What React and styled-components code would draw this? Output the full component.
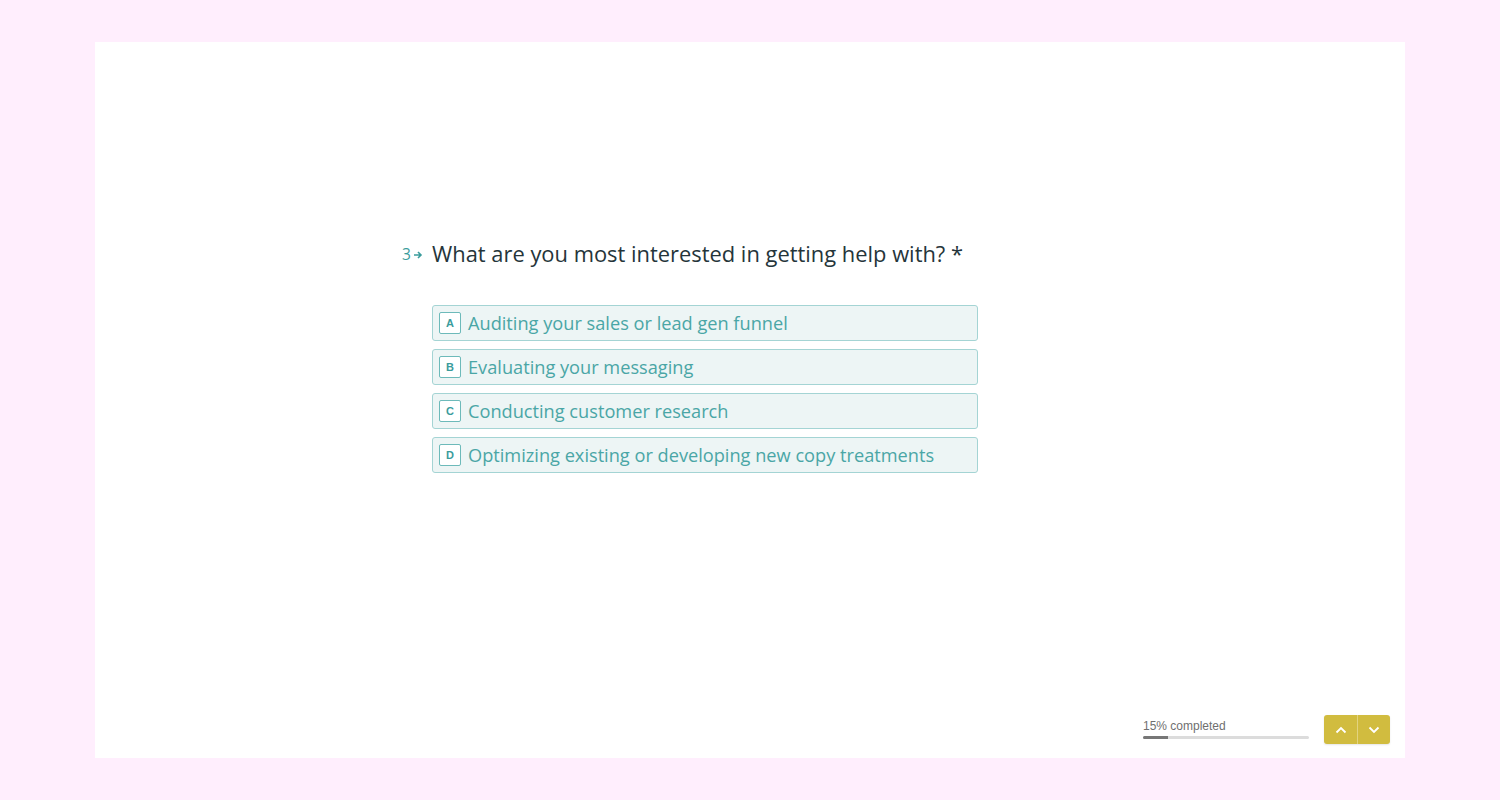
import styled, { createGlobalStyle } from "styled-components";

const GlobalStyle = createGlobalStyle`
  html, body {
    margin: 0;
    padding: 0;
    background: #ffeefd;
  }
  body {
    font-family: "Open Sans", "Liberation Sans", sans-serif;
  }
`;

const choices = [
  { key: "A", label: "Auditing your sales or lead gen funnel" },
  { key: "B", label: "Evaluating your messaging" },
  { key: "C", label: "Conducting customer research" },
  { key: "D", label: "Optimizing existing or developing new copy treatments" },
];

const App = () => {
  return (
    <Page>
      <GlobalStyle />
      <Card>
        <Main>
          <Question>
            <Counter>
              3
              <svg width="10" height="10" viewBox="0 0 10 10">
                <path d="M1 5h7M5 2l3 3-3 3" stroke="#3a9c9c" strokeWidth="1.6" fill="none" />
              </svg>
            </Counter>
            <Body>
              <Title>What are you most interested in getting help with? *</Title>
              <Choices>
                {choices.map((c) => (
                  <Choice key={c.key}>
                    <KeyBox>{c.key}</KeyBox>
                    <ChoiceLabel>{c.label}</ChoiceLabel>
                  </Choice>
                ))}
              </Choices>
            </Body>
          </Question>
        </Main>
        <Footer>
          <Progress>
            <ProgressText>15% completed</ProgressText>
            <Track>
              <Fill style={{ width: "15%" }} />
            </Track>
          </Progress>
          <NavButtons>
            <NavButton aria-label="previous">
              <svg width="14" height="14" viewBox="0 0 14 14">
                <path d="M2.5 9.5L7 5l4.5 4.5" stroke="#fff" strokeWidth="1.8" fill="none" />
              </svg>
            </NavButton>
            <NavButton aria-label="next" $divider>
              <svg width="14" height="14" viewBox="0 0 14 14">
                <path d="M2.5 4.5L7 9l4.5-4.5" stroke="#fff" strokeWidth="1.8" fill="none" />
              </svg>
            </NavButton>
          </NavButtons>
        </Footer>
      </Card>
    </Page>
  );
};

const Page = styled.div`
  box-sizing: border-box;
  height: 800px;
  padding: 42px 95px;
`;

const Card = styled.div`
  background: #fff;
  height: 716px;
  display: flex;
  flex-direction: column;
`;

const Main = styled.div`
  flex: 1;
  padding-top: 198px;
  padding-left: 307px;
`;

const Question = styled.div`
  display: flex;
`;

const Counter = styled.div`
  width: 30px;
  display: flex;
  align-items: center;
  gap: 2px;
  height: 28px;
  font-size: 15.5px;
  color: #3a9c9c;
  svg {
    margin-top: 1px;
  }
`;

const Body = styled.div`
  display: flex;
  flex-direction: column;
`;

const Title = styled.h1`
  margin: -1px 0 0;
  font-size: 21.9px;
  font-weight: 400;
  line-height: 30px;
  color: #25353a;
`;

const Choices = styled.div`
  margin-top: 36px;
  display: flex;
  flex-direction: column;
  gap: 8px;
  width: 546px;
`;

const Choice = styled.div`
  box-sizing: border-box;
  height: 36px;
  display: flex;
  align-items: center;
  padding: 0 6px;
  gap: 7px;
  background: #edf5f5;
  border: 1px solid #a4d4d4;
  border-radius: 3px;
`;

const KeyBox = styled.span`
  box-sizing: border-box;
  width: 22px;
  height: 22px;
  display: flex;
  align-items: center;
  justify-content: center;
  background: #fff;
  border: 1px solid #6dbaba;
  border-radius: 2px;
  font-family: "Liberation Sans", Arial, sans-serif;
  font-size: 11px;
  font-weight: 700;
  color: #3a9c9c;
`;

const ChoiceLabel = styled.span`
  font-size: 18.2px;
  color: #4aa6a6;
  line-height: 1;
  white-space: nowrap;
`;

const Footer = styled.div`
  display: flex;
  justify-content: flex-end;
  align-items: flex-end;
  padding: 0 15px 14px 0;
  gap: 15px;
`;

const Progress = styled.div`
  width: 166px;
  display: flex;
  flex-direction: column;
  gap: 3px;
  margin-bottom: 5px;
`;

const ProgressText = styled.span`
  font-family: "Liberation Sans", Arial, sans-serif;
  font-size: 12px;
  color: #6f6f6f;
`;

const Track = styled.div`
  height: 3px;
  background: #dcdcdc;
  border-radius: 2px;
  overflow: hidden;
`;

const Fill = styled.div`
  height: 100%;
  background: #777;
`;

const NavButtons = styled.div`
  display: flex;
  background: #d1bc3f;
  border-radius: 3px;
  box-shadow: 0 1px 2px rgba(0, 0, 0, 0.1);
`;

const NavButton = styled.button`
  width: 33px;
  height: 29px;
  border: none;
  padding: 0;
  background: transparent;
  display: flex;
  align-items: center;
  justify-content: center;
  border-left: ${(p) => (p.$divider ? "1px solid #e2d37f" : "none")};
  cursor: pointer;
`;

export default App;
